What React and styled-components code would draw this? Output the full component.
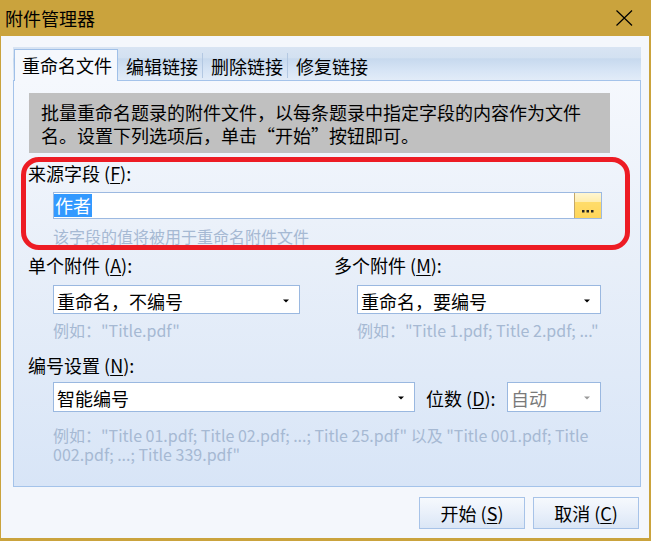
import React from "react";
import styled, { createGlobalStyle } from "styled-components";

const GlobalStyle = createGlobalStyle`
    html, body {
        margin: 0;
        padding: 0;
        background: #fff;
    }
    body {
        font-family: "Noto Sans CJK SC", "Noto Sans", sans-serif;
        color: #000;
    }
`;

// 창 전체 (금색 테두리)
const Window = styled.div`
    width: 651px;
    height: 541px;
    box-sizing: border-box;
    padding: 0 2px 3px 1px;
    background: #caa33d;
    display: flex;
    flex-direction: column;
`;

const TitleBar = styled.div`
    height: 36px;
    flex: none;
    display: flex;
    align-items: center;
    justify-content: space-between;
    padding: 0 16px 0 4px;
    font-size: 18px;
`;

const Body = styled.div`
    flex: 1;
    background: #f4f7fc;
    padding: 11px 8px 0 12px;
    display: flex;
    flex-direction: column;
`;

const TabStrip = styled.div`
    height: 33px;
    flex: none;
    display: flex;
    align-items: flex-end;
    background: linear-gradient(180deg, #d8e4f3 0%, #d3e1f1 32%, #c7d9ee 36%, #d6e4f5 70%, #e2ecf8 100%);
`;

const Tab = styled.div`
    box-sizing: border-box;
    font-size: 18px;
    white-space: nowrap;
    ${(props) => props.active ? `
        width: 104px;
        height: 32px;
        margin: 0 0 -1px 1px;
        padding: 1px 0 0 7px;
        line-height: 29px;
        background: #f5f8fd;
        border: 1px solid #a0c0e8;
        border-bottom: none;
        position: relative;
        z-index: 1;
    ` : `
        height: 25px;
        margin-bottom: 2px;
        padding: 2px 4px 0 8px;
        line-height: 22px;
        border-right: ${props.last ? "none" : "1px solid #b3c8e2"};
    `}
`;

const Panel = styled.div`
    height: 407px;
    flex: none;
    box-sizing: border-box;
    border: 1px solid #a4c3ea;
    background: linear-gradient(180deg, #f5f8fd 0%, #e8eff9 45%, #d8e5f7 100%);
    padding-top: 12px;
`;

const DescBox = styled.div`
    height: 60px;
    box-sizing: border-box;
    margin: 0 30px 0 15px;
    padding: 8px 12px 0 12px;
    background: #c0c0c0;
    font-size: 18px;
    line-height: 23px;
`;

const Highlight = styled.div`
    margin: 4px 10px 0 7px;
    border: 5px solid #ed1c24;
    border-radius: 18px;
    padding: 0 23px 0 2px;
`;

const Label = styled.div`
    font-size: 18px;
    line-height: 22px;
    white-space: nowrap;
`;

const Key = styled.span`
    text-decoration: underline;
    text-underline-offset: 2px;
`;

const InputBox = styled.div`
    height: 27px;
    box-sizing: border-box;
    margin: 8px 0 0 25px;
    border: 1px solid #9cb9e1;
    background: #fff;
    display: flex;
`;

const InputText = styled.div`
    flex: 1;
    display: flex;
    align-items: center;
`;

const Selected = styled.span`
    background: #3399ff;
    color: #fff;
    font-size: 18px;
    line-height: 23px;
    padding: 0 1px;
`;

const BrowseBtn = styled.div`
    width: 27px;
    flex: none;
    border-left: 1px solid #c4a86a;
    background: linear-gradient(180deg, #fff6d2 0%, #ffeeb0 34%, #ffdc6a 38%, #ffd65a 100%);
    display: flex;
    align-items: flex-end;
    justify-content: center;
    padding-bottom: 5px;
    box-sizing: border-box;
`;

const Hint = styled.div`
    margin: ${(props) => props.mt || 6}px 0 0 ${(props) => props.ml || 25}px;
    font-size: 16px;
    line-height: ${(props) => props.lh || 20}px;
    color: #a6b9d3;
    white-space: nowrap;
`;

const OptionsGrid = styled.div`
    margin: 4px 0 0 14px;
    display: grid;
    grid-template-columns: 306px 1fr;
`;

const Field = styled.div`
    display: flex;
    flex-direction: column;
`;

const Select = styled.div`
    width: ${(props) => props.width}px;
    height: ${(props) => props.height || 29}px;
    margin: ${(props) => props.mt || 0}px 0 0 ${(props) => props.ml || 0}px;
    box-sizing: border-box;
    border: 1px solid #9ab8e0;
    background: #fff;
    display: flex;
    align-items: center;
    justify-content: space-between;
    padding: 2px 10px 0 3px;
    font-size: 18px;
    color: ${(props) => props.disabled ? "#7a7a7a" : "#000"};
    flex: none;
`;

const NumberSection = styled.div`
    margin: 14px 0 0 14px;
`;

const NumberRow = styled.div`
    width: 548px;
    margin: 6px 0 0 25px;
    display: flex;
    align-items: center;
`;

const DigitsLabel = styled(Label)`
    margin-left: 11px;
    padding-top: 1px;
`;

const Footer = styled.div`
    display: flex;
    justify-content: flex-end;
    gap: 8px;
    padding: 10px 2px 0 0;
`;

const Button = styled.div`
    width: 106px;
    height: 32px;
    box-sizing: border-box;
    border: 1px solid #a7c3e8;
    background: linear-gradient(180deg, #f6f9fd 0%, #e9f0fa 50%, #dae6f6 100%);
    display: flex;
    align-items: center;
    justify-content: center;
    font-size: 18px;
`;

const Arrow = ({ color = "#000" }) => (
    <svg width="6" height="4" viewBox="0 0 6 4">
        <path d="M0 0.5 H6 L3 3.5 Z" fill={color} />
    </svg>
);

const CloseIcon = () => (
    <svg width="17" height="16" viewBox="0 0 17 16">
        <path d="M0.5 0.5 L16 15.5 M16 0.5 L0.5 15.5" stroke="#000" strokeWidth="1.2" fill="none" />
    </svg>
);

const Dots = () => (
    <svg width="12" height="3" viewBox="0 0 12 3">
        <rect x="0" y="0" width="2.5" height="2.5" fill="#222" />
        <rect x="4.5" y="0" width="2.5" height="2.5" fill="#222" />
        <rect x="9" y="0" width="2.5" height="2.5" fill="#222" />
    </svg>
);

const App = () => {
    return (
        <>
            <GlobalStyle />
            <Window>
                <TitleBar>
                    <span>附件管理器</span>
                    <CloseIcon />
                </TitleBar>

                <Body>
                    {/* 탭 */}
                    <TabStrip>
                        <Tab active>重命名文件</Tab>
                        <Tab>编辑链接</Tab>
                        <Tab>删除链接</Tab>
                        <Tab last>修复链接</Tab>
                    </TabStrip>

                    <Panel>
                        <DescBox>
                            批量重命名题录的附件文件，以每条题录中指定字段的内容作为文件<br />
                            名。设置下列选项后，单击“开始”按钮即可。
                        </DescBox>

                        {/* 빨간 표시 영역 */}
                        <Highlight>
                            <Label>来源字段 (<Key>F</Key>):</Label>
                            <InputBox>
                                <InputText>
                                    <Selected>作者</Selected>
                                </InputText>
                                <BrowseBtn><Dots /></BrowseBtn>
                            </InputBox>
                            <Hint mt={8} lh={18}>该字段的值将被用于重命名附件文件</Hint>
                        </Highlight>

                        <OptionsGrid>
                            <Field>
                                <Label>单个附件 (<Key>A</Key>):</Label>
                                <Select width={247} mt={9} ml={25}>
                                    <span>重命名，不编号</span>
                                    <Arrow />
                                </Select>
                                <Hint>例如："Title.pdf"</Hint>
                            </Field>
                            <Field>
                                <Label>多个附件 (<Key>M</Key>):</Label>
                                <Select width={244} mt={9} ml={23}>
                                    <span>重命名，要编号</span>
                                    <Arrow />
                                </Select>
                                <Hint ml={23}>例如："Title 1.pdf; Title 2.pdf; ..."</Hint>
                            </Field>
                        </OptionsGrid>

                        <NumberSection>
                            <Label>编号设置 (<Key>N</Key>):</Label>
                            <NumberRow>
                                <Select width={362} height={30}>
                                    <span>智能编号</span>
                                    <Arrow />
                                </Select>
                                <DigitsLabel>位数 (<Key>D</Key>):</DigitsLabel>
                                <Select width={94} height={30} ml={0} disabled style={{ marginLeft: "auto" }}>
                                    <span>自动</span>
                                    <Arrow color="#9a9a9a" />
                                </Select>
                            </NumberRow>
                            <Hint mt={14} lh={19}>
                                例如："Title 01.pdf; Title 02.pdf; ...; Title 25.pdf" 以及 "Title 001.pdf; Title<br />
                                002.pdf; ...; Title 339.pdf"
                            </Hint>
                        </NumberSection>
                    </Panel>

                    <Footer>
                        <Button>开始 (<Key>S</Key>)</Button>
                        <Button>取消 (<Key>C</Key>)</Button>
                    </Footer>
                </Body>
            </Window>
        </>
    );
};

export default App;
